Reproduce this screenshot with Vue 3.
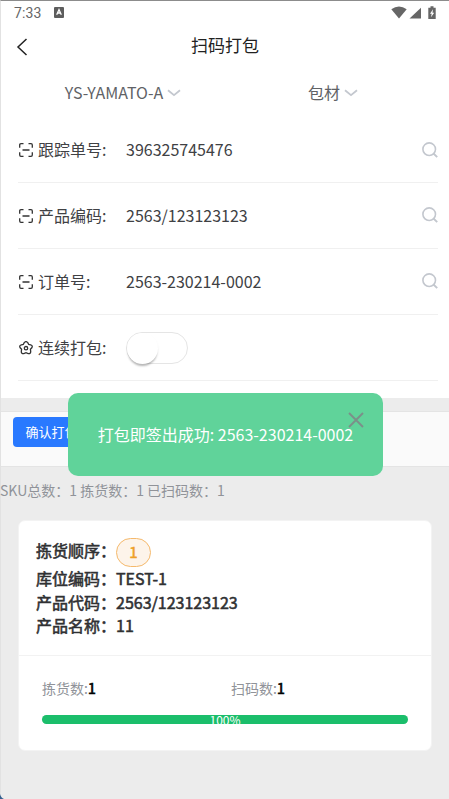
<script setup>
const fields = [
  { label: '跟踪单号:', value: '396325745476' },
  { label: '产品编码:', value: '2563/123123123' },
  { label: '订单号:', value: '2563-230214-0002' },
]
const details = [
  { label: '库位编码：', value: 'TEST-1' },
  { label: '产品代码：', value: '2563/123123123' },
  { label: '产品名称：', value: '11' },
]
const progress = 100
</script>

<template>
  <div class="screen">
    <section class="form">
      <div class="status">
        <span class="time">7:33</span>
        <svg class="app-mark" width="10" height="11" viewBox="0 0 10 11">
          <rect width="10" height="11" rx="1" fill="#5d5d5d" />
          <path d="M2.7 7.7 5 2.6l2.3 5.1M3.5 6h3" fill="none" stroke="#fff" stroke-width="1.3" />
        </svg>
        <svg class="signals" width="46" height="14" viewBox="0 0 46 14">
          <path d="M.3 3.2Q8-2 15.7 3.2L8 12.500Z" fill="#666" />
          <path d="M30 1.800V12.500H18.500Z" fill="#666" />
          <path d="M39.500 .3h3v1.400h2.200V13h-7.400V1.700h2.200Z" fill="#666" />
          <path d="M42 3.200 39 7.700h1.700L40 11.200 43.200 6.700h-1.700Z" fill="#fff" />
        </svg>
      </div>
      <header class="title-bar">
        <svg class="back" width="12" height="18" viewBox="0 0 12 18">
          <path d="M10.500 1 2 9l8.500 8" fill="none" stroke="#222" stroke-width="1.500" />
        </svg>
        <h1>扫码打包</h1>
      </header>
      <nav class="filters">
        <div v-for="name in ['YS-YAMATO-A', '包材']" :key="name" class="filter">
          <span class="name">{{ name }}</span>
          <svg width="14" height="8" viewBox="0 0 14 8">
            <path d="m1 1.200 6 5 6-5" fill="none" stroke="#c4c8cf" stroke-width="1.800" />
          </svg>
        </div>
      </nav>
      <div class="fields">
        <div v-for="field in fields" :key="field.label" class="field">
          <svg class="lead" width="14" height="14" viewBox="0 0 14 14">
            <path d="M.7 4.800V2Q.7.700 2 .7h2.500M9.500.7H12q1.300 0 1.300 1.300v2.800M.7 9.200V12q0 1.300 1.300 1.300h2.500M9.500 13.300H12q1.300 0 1.300-1.300V9.200M3.500 7h7" fill="none" stroke="#333" stroke-width="1.300" />
          </svg>
          <span class="label">{{ field.label }}</span>
          <span class="value">{{ field.value }}</span>
          <svg class="search" width="16" height="16" viewBox="0 0 16 16">
            <circle cx="7.200" cy="7.200" r="6.300" fill="none" stroke="#c3c7ce" stroke-width="1.600" />
            <path d="m11.500 11.500 3.700 3.700" stroke="#c3c7ce" stroke-width="1.900" />
          </svg>
        </div>
        <div class="field">
          <svg class="lead" width="14" height="14" viewBox="0 0 14 14">
            <path d="M5.200 1.600Q7-.4 8.800 1.600L9.700 3.500l2 .3q2.400.8 1.100 3l-1.400 1.500.3 2.100q0 2.600-2.500 2.200L7 11.700l-2.200.9q-2.500.4-2.500-2.200l.3-2.100L1.200 6.800q-1.300-2.200 1.100-3l2-.3Z" fill="none" stroke="#333" stroke-width="1.300" />
            <circle cx="7" cy="7.200" r="1.700" fill="none" stroke="#333" stroke-width="1.300" />
          </svg>
          <span class="label">连续打包:</span>
          <span class="switch"><span class="knob"></span></span>
        </div>
      </div>
    </section>

    <div class="actions"><button class="confirm">确认打包</button></div>
    <p class="summary">SKU总数：1 拣货数：1 已扫码数：1</p>

    <article class="card">
      <div class="info">
        <div class="line first">拣货顺序：<span class="tag">1</span></div>
        <div v-for="item in details" :key="item.label" class="line">{{ item.label }}{{ item.value }}</div>
      </div>
      <div class="counts">
        <div>拣货数:<b>1</b></div>
        <div>扫码数:<b>1</b></div>
      </div>
      <div class="track"><div class="fill" :style="{ width: progress + '%' }"><span>{{ progress }}%</span></div></div>
    </article>

    <div class="toast">
      <span class="message">打包即签出成功: 2563-230214-0002</span>
      <svg class="close" width="16" height="16" viewBox="0 0 16 16">
        <path d="m1 1 14 14M15 1 1 15" stroke="#7b9089" stroke-width="1.900" />
      </svg>
    </div>
    <svg class="corner" width="4" height="5" viewBox="0 0 4 5"><path d="M0 0Q1 4 4 5H0Z" fill="#35608f" /></svg>
  </div>
</template>

<style>
body { margin: 0; background: #ececec; }
</style>

<style scoped>
* { box-sizing: border-box; }
.screen {
  position: relative;
  width: 449px;
  height: 799px;
  border-top: 1px solid #8c8c8c;
  border-left: 1px solid #e2e2e2;
  background: #ececec;
  color: #303133;
  font-family: "Noto Sans CJK SC", sans-serif;
  font-size: 16px;
}
.form { height: 397px; background: #fff; }
.status { display: flex; align-items: center; height: 24px; padding: 0 12px 0 13px; color: #666; }
.time { font: 14px/24px Roboto, sans-serif; letter-spacing: 0.1px; }
.app-mark { margin-left: 13px; margin-top: -1px; }
.signals { margin-left: auto; }
.title-bar { display: grid; grid-template-columns: 40px 1fr 40px; align-items: center; height: 43px; }
.back { margin-left: 15px; margin-top: 1px; }
h1 { margin: 0; padding-bottom: 3px; text-align: center; font-size: 17px; line-height: 24px; font-weight: 400; color: #222; }
.filters { display: flex; height: 49px; padding-left: 18px; }
.filter { display: flex; align-items: center; justify-content: center; gap: 4px; width: 208px; color: #606266; }
.name { padding-bottom: 2px; }
.filters .filter + .filter { width: 212px; }
.fields { padding: 1px 11px 0 17px; }
.field { display: flex; align-items: center; height: 66px; border-bottom: 1px solid #f0f0f0; color: #404144; }
.field:first-child { height: 65px; }
.lead { margin-left: 1px; margin-right: 5px; flex: none; }
.label { width: 88px; line-height: 24px; padding-bottom: 2px; }
.value { flex: 1; line-height: 24px; padding-bottom: 2px; }
.search { margin-bottom: 1px; }
.switch { width: 62px; height: 32px; border: 1px solid #e5e5e5; border-radius: 16px; }
.knob { display: block; width: 31px; height: 31px; border-radius: 50%; background: #fff; box-shadow: 0 3px 2px -1px rgba(0, 0, 0, 0.25), 0 2px 3px rgba(0, 0, 0, 0.05); }
.actions { height: 56px; margin-top: 13px; padding: 5px 12px; border: 1px solid #e4e4e4; border-left: 0; border-right: 0; background: #fafafa; }
.confirm { display: block; width: 77px; height: 30px; padding: 0; border: 0; border-radius: 4px; background: #2979ff; color: #fff; font: 13px/28px "Noto Sans CJK SC", sans-serif; }
.summary { margin: 13px 0 0 -1px; height: 21px; font-size: 14px; line-height: 21px; color: #909399; white-space: pre; }
.card { width: 414px; height: 231px; margin: 19px 0 0 17px; border: 1px solid #f3f3f3; border-radius: 7px; background: #fff; }
.info { height: 135px; padding: 17px 17px 0; border-bottom: 1px solid #f2f2f2; -webkit-text-stroke: 0.55px currentColor; }
.line { height: 23.500px; line-height: 23.500px; }
.first { display: flex; align-items: flex-start; height: 29px; line-height: 25px; }
.tag { width: 35px; height: 29px; border: 1px solid #f5b96c; border-radius: 15px; background: #fdf4ea; color: #ee9f27; text-align: center; font-size: 15px; line-height: 26px; }
.counts { display: grid; grid-template-columns: 189px 1fr; margin: 21px 23px 0; font-size: 14px; line-height: 22px; color: #909399; }
.counts b { color: #000; font-weight: 400; -webkit-text-stroke: 0.7px #000; }
.track { height: 9px; margin: 16px 23px 0 23px; border-radius: 5px; background: #ececec; }
.fill { display: flex; align-items: center; justify-content: center; height: 9px; border-radius: 5px; background: #1bbe6b; color: #fff; font-size: 12px; line-height: 18px; }
.toast { position: absolute; left: 67px; top: 392px; width: 315px; height: 83px; border-radius: 10px; background: #60d39a; color: #fff; display: flex; justify-content: center; align-items: center; line-height: 24px; white-space: nowrap; }
.message { padding-bottom: 1px; }
.close { position: absolute; right: 19px; top: 19px; }
.corner { position: absolute; left: -1px; bottom: 0; }
</style>
